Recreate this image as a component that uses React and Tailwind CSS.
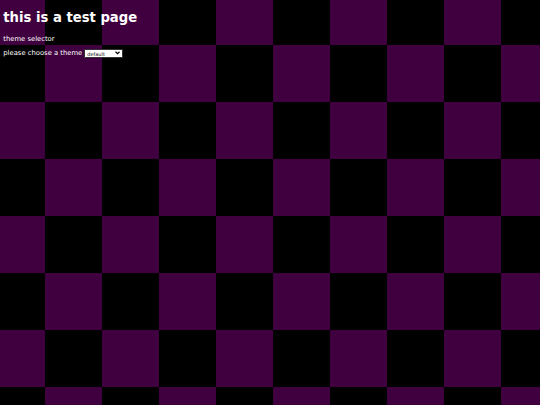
export default function App() {
  return (
    <div className="min-h-screen bg-[conic-gradient(#000_0_25%,#400040_0_50%,#000_0_75%,#400040_0)] bg-[length:114px_114px] bg-[position:-12px_-12px] px-[3.3px] pt-[9.5px] font-['DejaVu_Sans',sans-serif] text-[6.8px] text-white">
      {/* Heading */}
      <h1 className="text-[13.2px] leading-[15.4px] font-bold">this is a test page</h1>

      <p className="mt-[9.6px] leading-[8px]">theme selector</p>

      {/* Theme picker */}
      <div className="mt-[6.3px] flex items-center gap-[2px] leading-[8px]">
        <span>please choose a theme</span>
        <div className="relative h-[9px] w-[39px]">
          <select
            defaultValue="default"
            className="h-full w-full appearance-none rounded-[1px] border-[0.5px] border-[#333] bg-white pl-[2px] font-['DejaVu_Sans',sans-serif] text-[5px] leading-[8px] text-black outline-none"
          >
            <option value="default">default</option>
            <option value="dark">dark</option>
            <option value="light">light</option>
          </select>
          <svg
            className="pointer-events-none absolute right-[3px] top-[2.5px] h-[4px] w-[5px]"
            viewBox="0 0 10 8"
            fill="none"
            stroke="#000"
            strokeWidth="2.4"
          >
            <path d="M1 1.5 5 5.5 9 1.5" />
          </svg>
        </div>
      </div>
    </div>
  )
}
